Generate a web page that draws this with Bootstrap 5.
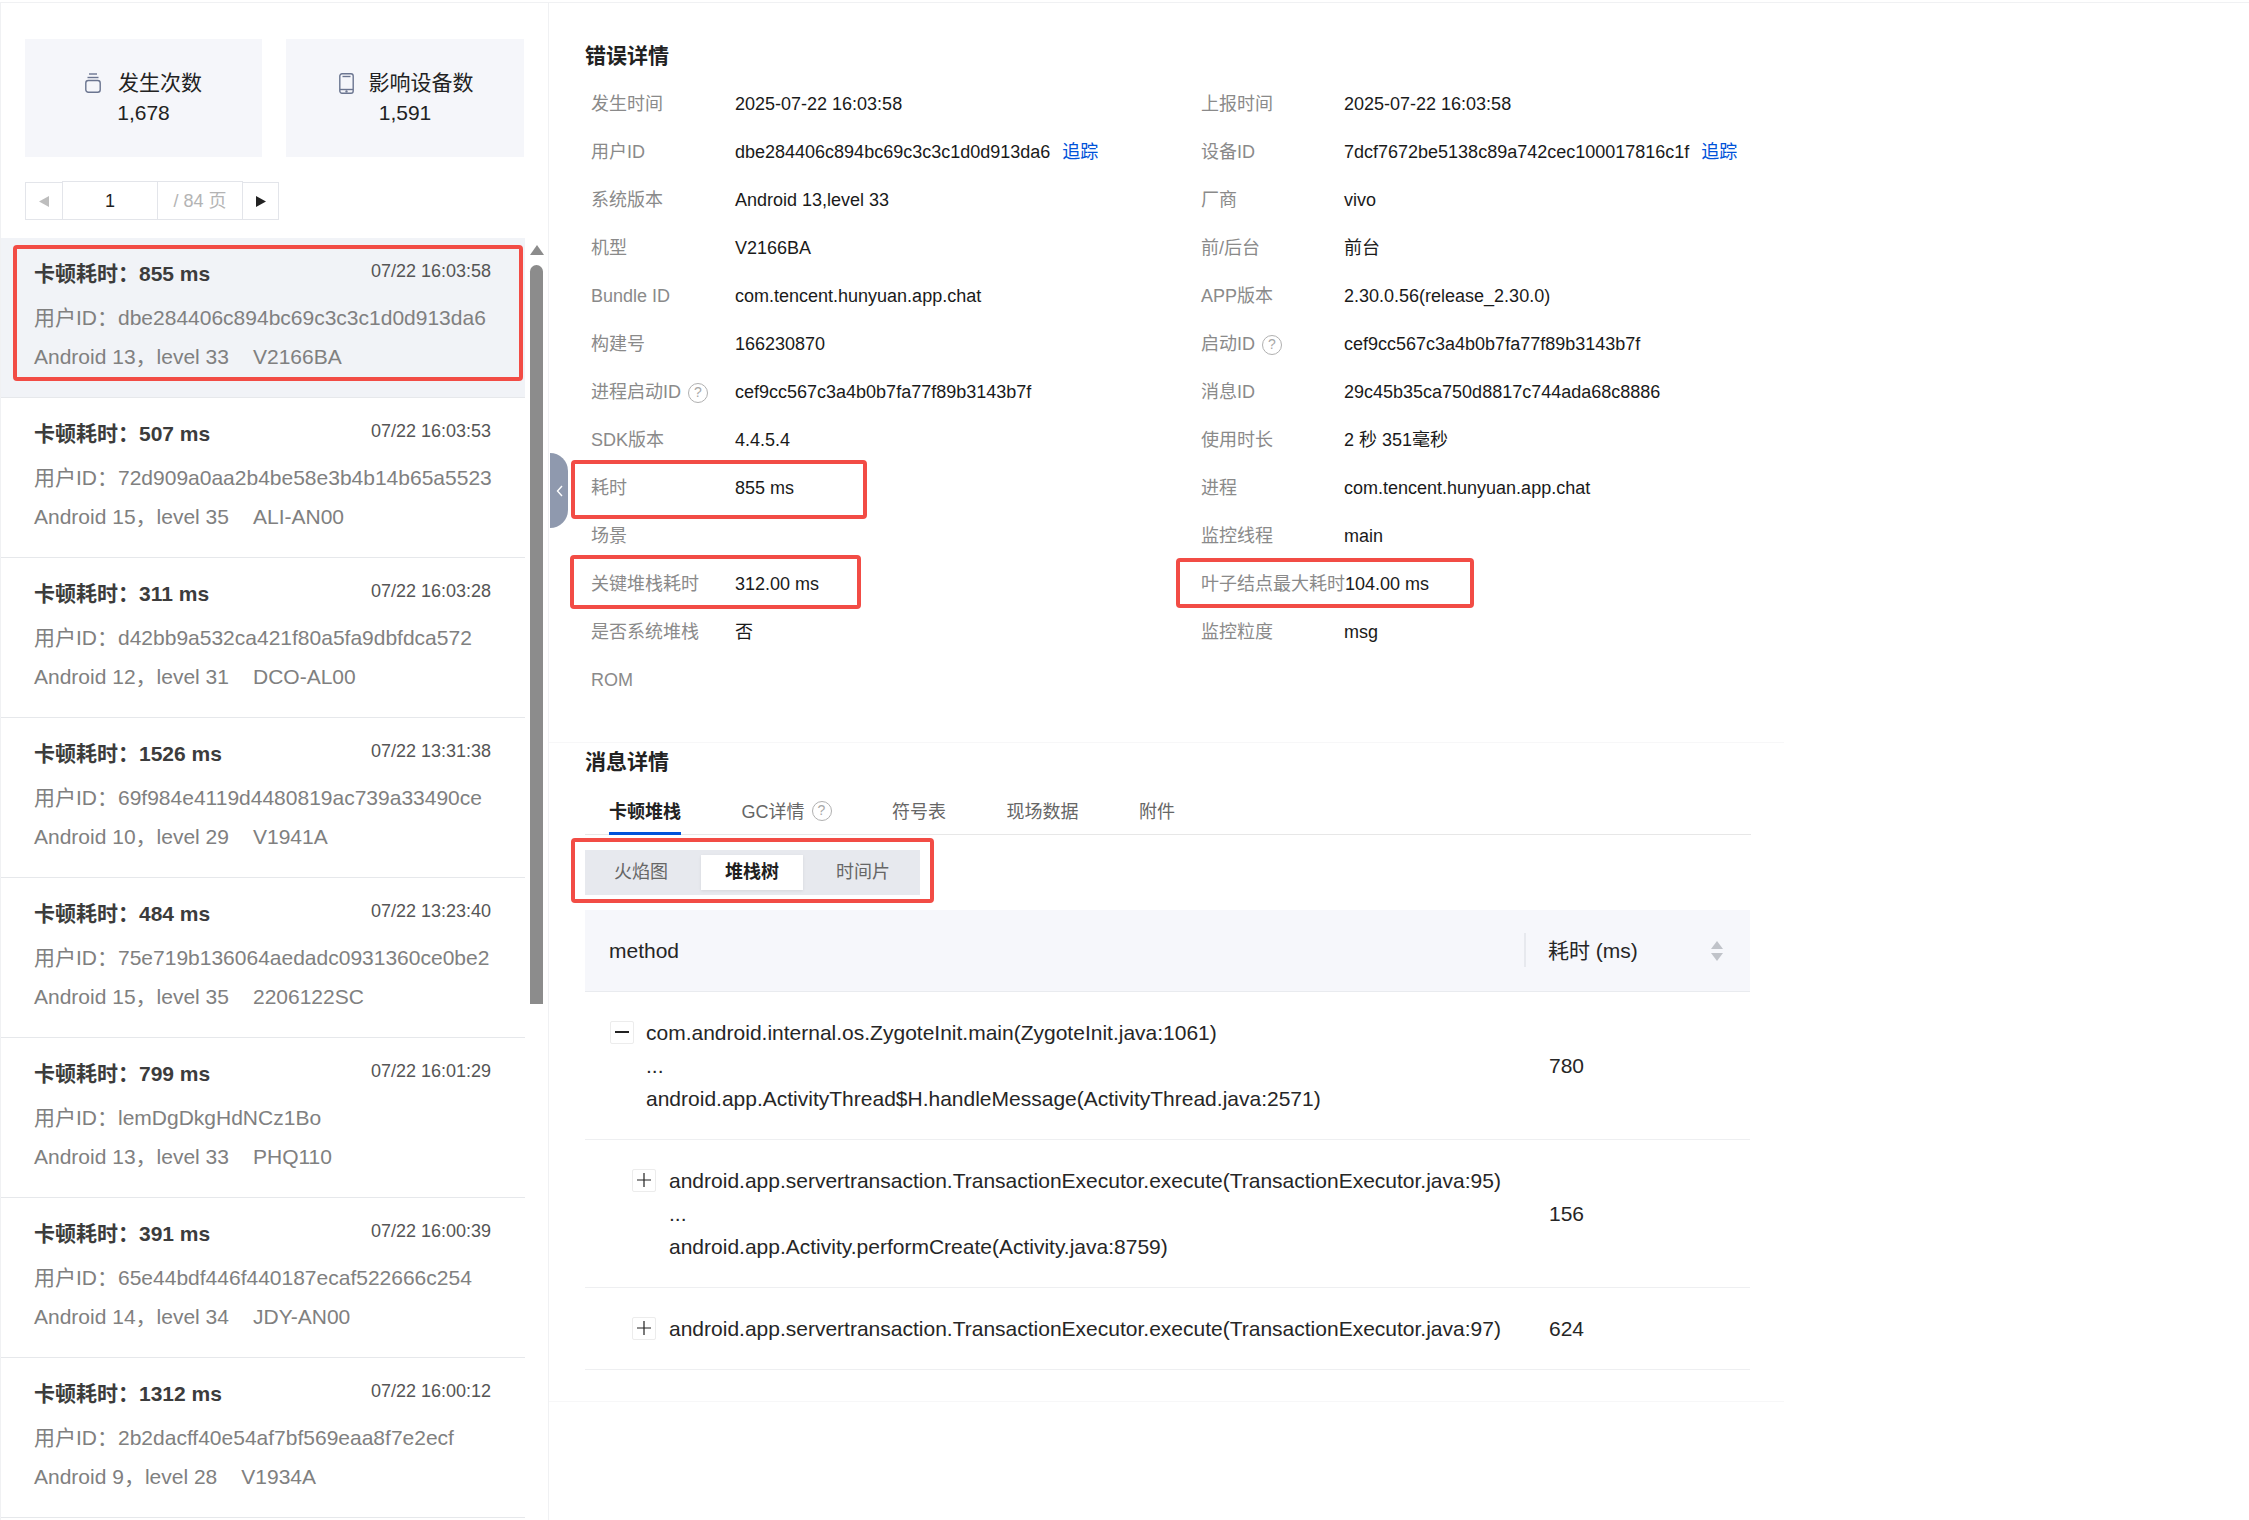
<!DOCTYPE html>
<html lang="zh-CN">
<head>
<meta charset="utf-8">
<title>错误详情</title>
<link href="https://cdn.jsdelivr.net/npm/bootstrap@5.3.0/dist/css/bootstrap.min.css" rel="stylesheet">
<style>
html,body{height:1520px;overflow:hidden;background:#fff;}
body{font-family:"Liberation Sans","Noto Sans CJK SC",sans-serif;color:#1f1f1f;padding-top:2px;}
.shell{position:relative;border-top:1px solid #f0f1f3;height:1518px;overflow:hidden;}
.side{width:549px;flex:0 0 549px;border-left:1px solid #f0f1f3;border-right:1px solid #f0f1f3;height:100%;}
.stats{padding:36px 0 0 24px;gap:24px;}
.stat-box{width:237px;height:118px;background:#f5f6fa;font-size:21px;line-height:30px;color:#222;padding-top:29px;}
.stat-box:last-child{width:238px;}
.stat-head{gap:17px;}
.stat-box:last-child .stat-head{gap:15px;padding-left:2px;}
.pager{margin:25px 0 0 24px;height:38px;}
.pg-arrow{width:38px;height:38px;border:1px solid #e3e5ea;}
.pg-arrow.nxt{width:37px;margin-left:-1px;}
.pg-num{width:96px;height:39px;margin-top:-1px;border:1px solid #e3e5ea;margin-left:-1px;padding-top:1px;font-size:18px;}
.pg-total{width:85px;height:39px;margin-top:-1px;border:1px solid #e3e5ea;border-left:0;padding-top:1px;font-size:18px;color:#b4b4b4;}
.list-wrap{margin-top:18px;}
.items{width:524px;flex:0 0 524px;}
.entry{height:160px;padding:16px 34px 0 33px;border-bottom:1px solid #e6e8eb;}
.entry.on{background:#f1f3f7;}
.entry-top{line-height:40px;}
.entry-title{font-size:21px;font-weight:700;color:#3c3c3c;}
.entry-time{font-size:18px;line-height:35px;color:#555;}
.entry-line{font-size:21px;line-height:40px;color:#808080;white-space:nowrap;}
.entry-line.first{margin-top:4px;margin-bottom:-1px;}
.entry-model{margin-left:24px;}
.rail{width:23px;padding:7px 0 0 5px;}
.rail-arrow{width:0;height:0;border-left:7px solid transparent;border-right:7px solid transparent;border-bottom:10px solid #8c8c8c;}
.rail-thumb{width:13px;height:739px;margin-top:10px;background:#8c8c8c;border-radius:7px 7px 0 0;}
.content{width:1235px;flex:0 0 1235px;}
.block{padding:0 33px 0 36px;}
.block.one{height:740px;border-bottom:1px solid #f7f7f8;padding-top:37px;}
.block.two{height:656px;border-bottom:1px solid #f7f7f8;}
.heading{font-size:21px;font-weight:700;line-height:32px;color:#222;margin:0;}
.heading.sub{margin-top:3px;}
.info-grid{display:grid;grid-template-columns:610px 1fr;margin-top:8px;}
.info{height:48px;font-size:18px;padding-left:6px;white-space:nowrap;}
.info-k{flex:0 0 144px;color:#8a8a8a;}
.info:nth-child(even) .info-k{flex-basis:143px;}
.info-v{color:#1a1a1a;}
.trace{color:#0052d9;margin-left:12px;text-decoration:none;}
.qmark{display:inline-block;width:20px;height:20px;border:1.5px solid #b0b0b0;border-radius:50%;color:#a8a8a8;font-size:14px;line-height:17px;text-align:center;margin-left:7px;vertical-align:1px;}
.tabbar{height:57px;padding-left:24px;gap:60.5px;border-bottom:1px solid #e7e7e7;}
.tabitem{font-size:18px;color:#666;line-height:46px;height:57px;padding-top:11px;box-sizing:border-box;white-space:nowrap;text-decoration:none;}
.tabitem .qmark{vertical-align:3px;}
.tabitem.on{font-weight:700;color:#222;border-bottom:3px solid #0052d9;}
.seg{width:335px;height:45px;margin-top:15px;padding:5px;gap:9px;background:#e7e9ee;}
.seg-btn{width:102px;height:35px;padding:0;border:0;border-radius:0;font-size:18px;line-height:35px;color:#666;background:transparent;}
.seg-btn.on{background:#fff;color:#1f1f1f;font-weight:700;box-shadow:0 1px 3px rgba(0,0,0,.08);}
.seg-btn.on:hover,.seg-btn:hover{color:#444;}
.stack{margin:15px 0 0;table-layout:fixed;width:1165px;font-size:21px;color:#262626;}
.stack th{position:relative;height:81px;padding:0 0 0 24px;background:#f6f7fb;font-weight:400;border-bottom:1px solid #e9ebef;vertical-align:middle;color:#262626;}
.stack th.ms::before{content:"";position:absolute;left:0;top:23px;height:34px;width:2px;background:#e7e9ee;}
.stack td{padding:24px 0 24px 25px;line-height:33px;border-bottom:1px solid #eeeff1;vertical-align:middle;color:#262626;}
.sorter{position:absolute;right:27px;top:31px;}
.tree{gap:12px;}
.tree.deep{margin-left:22px;gap:13px;}
.toggle{flex:0 0 24px;width:24px;height:23px;margin-top:5px;border:1px solid #ececec;border-radius:2px;}
.callout{position:absolute;border:4px solid #f24c45;border-radius:4px;pointer-events:none;}
.c1{left:13px;top:242px;width:510px;height:136px;}
.c2{left:571px;top:457px;width:296px;height:59px;}
.c3{left:570px;top:552px;width:291px;height:54px;}
.c4{left:1176px;top:555px;width:298px;height:50px;}
.c5{left:571px;top:835px;width:363px;height:65px;}
.fold{position:absolute;left:550px;top:450px;width:18px;height:75px;background:#8f99ae;border-radius:0 18px 18px 0;}
</style>
</head>
<body>
<div class="shell d-flex">
  <aside class="side d-flex flex-column">
    <div class="stats d-flex">
      <div class="stat-box text-center">
        <div class="stat-head d-flex justify-content-center align-items-center">
          <svg width="16" height="20" viewBox="0 0 16 20" fill="none" stroke="#6b7590" stroke-width="1.4"><path d="M4 1h8"/><path d="M2.5 4.5h11"/><rect x=".8" y="7.5" width="14.4" height="11.7" rx="2.5"/></svg>
          <span>发生次数</span>
        </div>
        <div>1,678</div>
      </div>
      <div class="stat-box text-center">
        <div class="stat-head d-flex justify-content-center align-items-center">
          <svg width="15" height="21" viewBox="0 0 15 21" fill="none" stroke="#6b7590" stroke-width="1.4"><rect x=".8" y=".8" width="13.4" height="19.4" rx="2.2"/><path d="M3.5 3.5h8"/><path d="M1 16.5h13"/><circle cx="7.5" cy="18.4" r=".5"/></svg>
          <span>影响设备数</span>
        </div>
        <div>1,591</div>
      </div>
    </div>
    <div class="pager d-flex">
      <div class="pg-arrow d-flex align-items-center justify-content-center"><svg width="10" height="11" viewBox="0 0 10 11"><path d="M10 0v11L0 5.5z" fill="#bdbdbd"/></svg></div>
      <div class="pg-num d-flex align-items-center justify-content-center">1</div>
      <div class="pg-total d-flex align-items-center justify-content-center">/ 84 页</div>
      <div class="pg-arrow nxt d-flex align-items-center justify-content-center"><svg width="10" height="11" viewBox="0 0 10 11"><path d="M0 0v11l10-5.5z" fill="#222"/></svg></div>
    </div>
    <div class="list-wrap d-flex flex-grow-1 overflow-hidden">
      <div class="items">
        <div class="entry on">
          <div class="entry-top d-flex justify-content-between align-items-start"><span class="entry-title">卡顿耗时：855 ms</span><span class="entry-time">07/22 16:03:58</span></div>
          <div class="entry-line first">用户ID：dbe284406c894bc69c3c3c1d0d913da6</div>
          <div class="entry-line">Android 13，level 33<span class="entry-model">V2166BA</span></div>
        </div>
        <div class="entry">
          <div class="entry-top d-flex justify-content-between align-items-start"><span class="entry-title">卡顿耗时：507 ms</span><span class="entry-time">07/22 16:03:53</span></div>
          <div class="entry-line first">用户ID：72d909a0aa2b4be58e3b4b14b65a5523</div>
          <div class="entry-line">Android 15，level 35<span class="entry-model">ALI-AN00</span></div>
        </div>
        <div class="entry">
          <div class="entry-top d-flex justify-content-between align-items-start"><span class="entry-title">卡顿耗时：311 ms</span><span class="entry-time">07/22 16:03:28</span></div>
          <div class="entry-line first">用户ID：d42bb9a532ca421f80a5fa9dbfdca572</div>
          <div class="entry-line">Android 12，level 31<span class="entry-model">DCO-AL00</span></div>
        </div>
        <div class="entry">
          <div class="entry-top d-flex justify-content-between align-items-start"><span class="entry-title">卡顿耗时：1526 ms</span><span class="entry-time">07/22 13:31:38</span></div>
          <div class="entry-line first">用户ID：69f984e4119d4480819ac739a33490ce</div>
          <div class="entry-line">Android 10，level 29<span class="entry-model">V1941A</span></div>
        </div>
        <div class="entry">
          <div class="entry-top d-flex justify-content-between align-items-start"><span class="entry-title">卡顿耗时：484 ms</span><span class="entry-time">07/22 13:23:40</span></div>
          <div class="entry-line first">用户ID：75e719b136064aedadc0931360ce0be2</div>
          <div class="entry-line">Android 15，level 35<span class="entry-model">2206122SC</span></div>
        </div>
        <div class="entry">
          <div class="entry-top d-flex justify-content-between align-items-start"><span class="entry-title">卡顿耗时：799 ms</span><span class="entry-time">07/22 16:01:29</span></div>
          <div class="entry-line first">用户ID：lemDgDkgHdNCz1Bo</div>
          <div class="entry-line">Android 13，level 33<span class="entry-model">PHQ110</span></div>
        </div>
        <div class="entry">
          <div class="entry-top d-flex justify-content-between align-items-start"><span class="entry-title">卡顿耗时：391 ms</span><span class="entry-time">07/22 16:00:39</span></div>
          <div class="entry-line first">用户ID：65e44bdf446f440187ecaf522666c254</div>
          <div class="entry-line">Android 14，level 34<span class="entry-model">JDY-AN00</span></div>
        </div>
        <div class="entry">
          <div class="entry-top d-flex justify-content-between align-items-start"><span class="entry-title">卡顿耗时：1312 ms</span><span class="entry-time">07/22 16:00:12</span></div>
          <div class="entry-line first">用户ID：2b2dacff40e54af7bf569eaa8f7e2ecf</div>
          <div class="entry-line">Android 9，level 28<span class="entry-model">V1934A</span></div>
        </div>
      </div>
      <div class="rail">
        <div class="rail-arrow"></div>
        <div class="rail-thumb"></div>
      </div>
    </div>
  </aside>

  <main class="content">
    <section class="block one">
      <h2 class="heading">错误详情</h2>
      <div class="info-grid">
        <div class="info d-flex align-items-center"><span class="info-k">发生时间</span><span class="info-v">2025-07-22 16:03:58</span></div>
        <div class="info d-flex align-items-center"><span class="info-k">上报时间</span><span class="info-v">2025-07-22 16:03:58</span></div>
        <div class="info d-flex align-items-center"><span class="info-k">用户ID</span><span class="info-v">dbe284406c894bc69c3c3c1d0d913da6<a class="trace" href="#">追踪</a></span></div>
        <div class="info d-flex align-items-center"><span class="info-k">设备ID</span><span class="info-v">7dcf7672be5138c89a742cec100017816c1f<a class="trace" href="#">追踪</a></span></div>
        <div class="info d-flex align-items-center"><span class="info-k">系统版本</span><span class="info-v">Android 13,level 33</span></div>
        <div class="info d-flex align-items-center"><span class="info-k">厂商</span><span class="info-v">vivo</span></div>
        <div class="info d-flex align-items-center"><span class="info-k">机型</span><span class="info-v">V2166BA</span></div>
        <div class="info d-flex align-items-center"><span class="info-k">前/后台</span><span class="info-v">前台</span></div>
        <div class="info d-flex align-items-center"><span class="info-k">Bundle ID</span><span class="info-v">com.tencent.hunyuan.app.chat</span></div>
        <div class="info d-flex align-items-center"><span class="info-k">APP版本</span><span class="info-v">2.30.0.56(release_2.30.0)</span></div>
        <div class="info d-flex align-items-center"><span class="info-k">构建号</span><span class="info-v">166230870</span></div>
        <div class="info d-flex align-items-center"><span class="info-k">启动ID<span class="qmark">?</span></span><span class="info-v">cef9cc567c3a4b0b7fa77f89b3143b7f</span></div>
        <div class="info d-flex align-items-center"><span class="info-k">进程启动ID<span class="qmark">?</span></span><span class="info-v">cef9cc567c3a4b0b7fa77f89b3143b7f</span></div>
        <div class="info d-flex align-items-center"><span class="info-k">消息ID</span><span class="info-v">29c45b35ca750d8817c744ada68c8886</span></div>
        <div class="info d-flex align-items-center"><span class="info-k">SDK版本</span><span class="info-v">4.4.5.4</span></div>
        <div class="info d-flex align-items-center"><span class="info-k">使用时长</span><span class="info-v">2 秒 351毫秒</span></div>
        <div class="info d-flex align-items-center"><span class="info-k">耗时</span><span class="info-v">855 ms</span></div>
        <div class="info d-flex align-items-center"><span class="info-k">进程</span><span class="info-v">com.tencent.hunyuan.app.chat</span></div>
        <div class="info d-flex align-items-center"><span class="info-k">场景</span><span class="info-v"></span></div>
        <div class="info d-flex align-items-center"><span class="info-k">监控线程</span><span class="info-v">main</span></div>
        <div class="info d-flex align-items-center"><span class="info-k">关键堆栈耗时</span><span class="info-v">312.00 ms</span></div>
        <div class="info d-flex align-items-center"><span class="info-k">叶子结点最大耗时</span><span class="info-v">104.00 ms</span></div>
        <div class="info d-flex align-items-center"><span class="info-k">是否系统堆栈</span><span class="info-v">否</span></div>
        <div class="info d-flex align-items-center"><span class="info-k">监控粒度</span><span class="info-v">msg</span></div>
        <div class="info d-flex align-items-center"><span class="info-k">ROM</span><span class="info-v"></span></div>
      </div>
    </section>

    <section class="block two">
      <h2 class="heading sub">消息详情</h2>
      <div class="tabbar nav">
        <a class="tabitem on" href="#">卡顿堆栈</a>
        <a class="tabitem" href="#">GC详情<span class="qmark">?</span></a>
        <a class="tabitem" href="#">符号表</a>
        <a class="tabitem" href="#">现场数据</a>
        <a class="tabitem" href="#">附件</a>
      </div>
      <div class="seg d-flex">
        <button type="button" class="btn seg-btn">火焰图</button>
        <button type="button" class="btn seg-btn on">堆栈树</button>
        <button type="button" class="btn seg-btn">时间片</button>
      </div>
      <table class="table stack">
        <colgroup><col style="width:939px"><col style="width:226px"></colgroup>
        <thead>
          <tr>
            <th>method</th>
            <th class="ms">耗时 (ms)
              <svg class="sorter" width="12" height="20" viewBox="0 0 12 20"><path d="M6 0l6 8H0z" fill="#c0c3c9"/><path d="M6 20l6-8H0z" fill="#c0c3c9"/></svg>
            </th>
          </tr>
        </thead>
        <tbody>
          <tr>
            <td>
              <div class="tree d-flex">
                <span class="toggle d-flex align-items-center justify-content-center"><svg width="14" height="14" viewBox="0 0 14 14"><path d="M0 7h14" stroke="#222" stroke-width="2"/></svg></span>
                <div>com.android.internal.os.ZygoteInit.main(ZygoteInit.java:1061)<br>...<br>android.app.ActivityThread$H.handleMessage(ActivityThread.java:2571)</div>
              </div>
            </td>
            <td>780</td>
          </tr>
          <tr>
            <td>
              <div class="tree deep d-flex">
                <span class="toggle d-flex align-items-center justify-content-center"><svg width="14" height="14" viewBox="0 0 14 14"><path d="M0 7h14M7 0v14" stroke="#222" stroke-width="1.2"/></svg></span>
                <div>android.app.servertransaction.TransactionExecutor.execute(TransactionExecutor.java:95)<br>...<br>android.app.Activity.performCreate(Activity.java:8759)</div>
              </div>
            </td>
            <td>156</td>
          </tr>
          <tr>
            <td>
              <div class="tree deep d-flex">
                <span class="toggle d-flex align-items-center justify-content-center"><svg width="14" height="14" viewBox="0 0 14 14"><path d="M0 7h14M7 0v14" stroke="#222" stroke-width="1.2"/></svg></span>
                <div>android.app.servertransaction.TransactionExecutor.execute(TransactionExecutor.java:97)</div>
              </div>
            </td>
            <td>624</td>
          </tr>
        </tbody>
      </table>
    </section>
  </main>

  <div class="fold d-flex align-items-center justify-content-center"><svg width="7" height="12" viewBox="0 0 7 12" fill="none"><path d="M6 1L1.5 6 6 11" stroke="#fff" stroke-width="1.4"/></svg></div>
  <div class="callout c1"></div>
  <div class="callout c2"></div>
  <div class="callout c3"></div>
  <div class="callout c4"></div>
  <div class="callout c5"></div>
</div>
<script src="https://cdn.jsdelivr.net/npm/bootstrap@5.3.0/dist/js/bootstrap.bundle.min.js"></script>
</body>
</html>
